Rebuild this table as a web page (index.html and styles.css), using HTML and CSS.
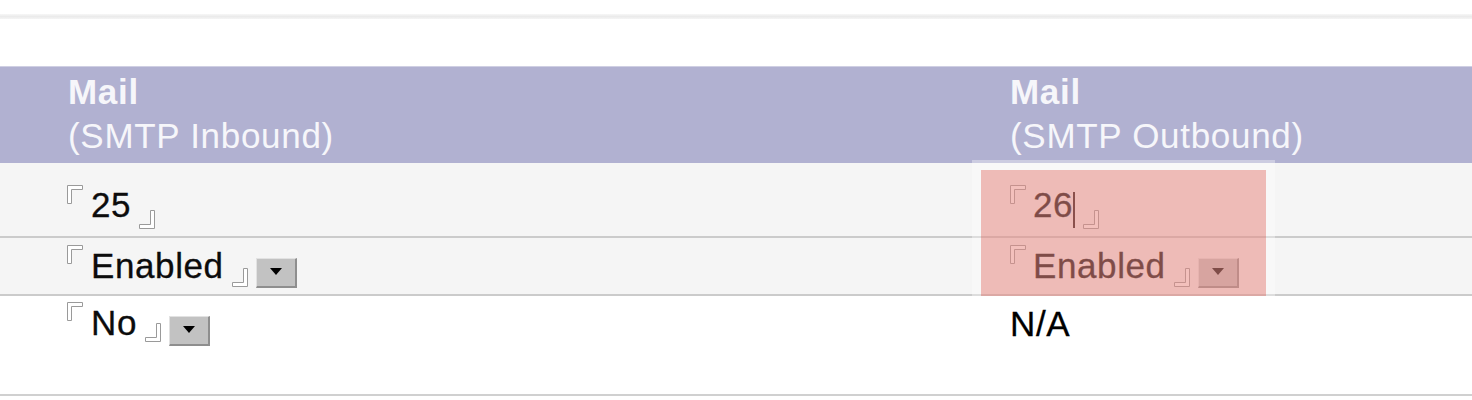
FILE: index.html
```html
<!DOCTYPE html>
<html>
<head>
<meta charset="utf-8">
<link rel="stylesheet" href="styles.css">
</head>
<body>
<div class="topline"></div>
<div class="table">
  <div class="row head">
    <div class="cell"><div class="h-title">Mail</div><div class="h-sub">(SMTP Inbound)</div></div>
    <div class="cell"><div class="h-title">Mail</div><div class="h-sub">(SMTP Outbound)</div></div>
  </div>
  <div class="row r1">
    <div class="cell">
      <svg class="mk tl" width="16" height="19" viewBox="0 0 16 19"><path d="M0.5 0.5H15.5V4.5H4.5V18.5H0.5Z" fill="#fff" stroke="#9a9a9a"/></svg>
      <span class="txt">25</span>
      <svg class="mk br" width="16" height="19" viewBox="0 0 16 19"><path d="M15.5 18.5H0.5V14.5H11.5V0.5H15.5Z" fill="#fff" stroke="#9a9a9a"/></svg>
    </div>
    <div class="cell c2">
      <svg class="mk tl" width="16" height="19" viewBox="0 0 16 19"><path d="M0.5 0.5H15.5V4.5H4.5V18.5H0.5Z" fill="#fff" stroke="#9a9a9a"/></svg>
      <span class="txt">26</span><span class="caret"></span>
      <svg class="mk br" width="16" height="19" viewBox="0 0 16 19"><path d="M15.5 18.5H0.5V14.5H11.5V0.5H15.5Z" fill="#fff" stroke="#9a9a9a"/></svg>
    </div>
  </div>
  <div class="row r2">
    <div class="cell">
      <svg class="mk tl" width="16" height="19" viewBox="0 0 16 19"><path d="M0.5 0.5H15.5V4.5H4.5V18.5H0.5Z" fill="#fff" stroke="#9a9a9a"/></svg>
      <span class="txt">Enabled</span>
      <svg class="mk br" width="16" height="19" viewBox="0 0 16 19"><path d="M15.5 18.5H0.5V14.5H11.5V0.5H15.5Z" fill="#fff" stroke="#9a9a9a"/></svg>
      <span class="btn"><span class="tri"></span></span>
    </div>
    <div class="cell c2">
      <svg class="mk tl" width="16" height="19" viewBox="0 0 16 19"><path d="M0.5 0.5H15.5V4.5H4.5V18.5H0.5Z" fill="#fff" stroke="#9a9a9a"/></svg>
      <span class="txt">Enabled</span>
      <svg class="mk br" width="16" height="19" viewBox="0 0 16 19"><path d="M15.5 18.5H0.5V14.5H11.5V0.5H15.5Z" fill="#fff" stroke="#9a9a9a"/></svg>
      <span class="btn"><span class="tri"></span></span>
    </div>
  </div>
  <div class="row r3">
    <div class="cell">
      <svg class="mk tl" width="16" height="19" viewBox="0 0 16 19"><path d="M0.5 0.5H15.5V4.5H4.5V18.5H0.5Z" fill="#fff" stroke="#9a9a9a"/></svg>
      <span class="txt">No</span>
      <svg class="mk br" width="16" height="19" viewBox="0 0 16 19"><path d="M15.5 18.5H0.5V14.5H11.5V0.5H15.5Z" fill="#fff" stroke="#9a9a9a"/></svg>
      <span class="btn"><span class="tri"></span></span>
    </div>
    <div class="cell c2">
      <span class="txt plain">N/A</span>
    </div>
  </div>
  <div class="glow"></div>
  <div class="highlight"></div>
</div>
</body>
</html>
```
FILE: styles.css
```css
html, body {
  margin: 0;
  padding: 0;
  background: #ffffff;
}
body {
  font-family: "Liberation Sans", Arial, sans-serif;
  width: 1472px;
  height: 400px;
  overflow: hidden;
}
.topline {
  margin-top: 14px;
  height: 5px;
  background: linear-gradient(#f7f7f7, #ebebeb 50%, #f4f4f4);
}
.table {
  position: relative;
  margin-top: 47px;
}
.row {
  display: grid;
  grid-template-columns: 942px 1fr;
  box-sizing: border-box;
}
.cell {
  padding-left: 67px;
  display: flex;
  align-items: flex-start;
}
.c2 {
  padding-left: 68px;
}
.head {
  background: #b1b1d1;
  border-top: 1px solid #cfcfe3;
  height: 97px;
  color: #f6f6fa;
}
.head .cell {
  flex-direction: column;
  padding-top: 3px;
  padding-left: 68px;
}
.h-title, .h-sub {
  font-size: 35px;
  line-height: 44px;
  letter-spacing: 0.7px;
}
.h-title {
  font-weight: bold;
}
.r1, .r2 {
  background: #f5f5f5;
}
.r1 {
  height: 75px;
  border-bottom: 2px solid #cbcbcb;
}
.r2 {
  height: 58px;
  border-bottom: 2px solid #cbcbcb;
}
.r3 {
  height: 100px;
  border-bottom: 2px solid #d0d0d0;
  background: #ffffff;
}
.txt {
  font-size: 35px;
  line-height: 38px;
  letter-spacing: 0.6px;
  color: #0c0c0c;
  margin-left: 8px;
  -webkit-text-stroke: 0.3px #0c0c0c;
}
.c2 .txt {
  margin-left: 7px;
  color: #000000;
  -webkit-text-stroke: 0.3px #000000;
}
.txt.plain {
  margin-left: 0;
}
.mk {
  display: block;
  flex: none;
}
.mk.br {
  margin-left: 8px;
}
.caret {
  width: 2px;
  height: 36px;
  background: #1a0a0a;
}
.btn {
  flex: none;
  box-sizing: border-box;
  width: 41px;
  height: 30px;
  margin-left: 8px;
  background: #c2c2c2;
  border-top: 1px solid #e2e2e2;
  border-left: 1px solid #e2e2e2;
  border-right: 2px solid #8e8e8e;
  border-bottom: 2px solid #8e8e8e;
  display: flex;
  justify-content: center;
  align-items: center;
}
.tri {
  width: 0;
  height: 0;
  border-left: 6px solid transparent;
  border-right: 6px solid transparent;
  border-top: 7px solid #000000;
  margin-top: -2px;
}
/* row 1 vertical placement */
.r1 .cell { padding-top: 22px; }
.r1 .txt { margin-top: 1px; }
.r1 .mk.br { margin-top: 25px; }
.r1 .caret { margin-top: 7px; }
/* row 2 */
.r2 .cell { padding-top: 7px; }
.r2 .txt { margin-top: 2px; }
.r2 .mk.br { margin-top: 23px; }
.r2 .btn { margin-top: 13px; }
/* row 3 */
.r3 .cell { padding-top: 6px; }
.r3 .txt { margin-top: 2px; }
.r3 .mk.br { margin-top: 21px; }
.r3 .btn { margin-top: 14px; }
.r3 .txt.plain { margin-top: 3px; }

.glow {
  position: absolute;
  left: 972px;
  top: 94px;
  width: 303px;
  height: 136px;
  background: rgba(255, 255, 255, 0.35);
}
.highlight {
  position: absolute;
  left: 981px;
  top: 104px;
  width: 285px;
  height: 126px;
  background: rgba(215, 45, 32, 0.3);
}
```
